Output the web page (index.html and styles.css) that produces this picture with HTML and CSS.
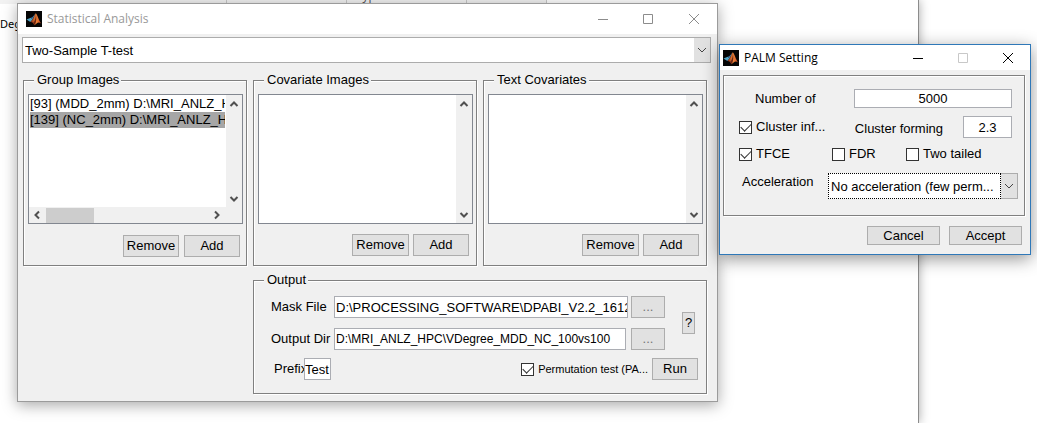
FILE: index.html
```
<!DOCTYPE html>
<html lang="en">
<head>
<meta charset="utf-8">
<title>Statistical Analysis</title>
<link rel="stylesheet" href="styles.css">
</head>
<body>
<svg class="defs" aria-hidden="true">
  <defs>
    <linearGradient id="flame" x1="0" y1="0" x2="1" y2="0">
      <stop offset="0" stop-color="#7a1f10"/><stop offset="0.5" stop-color="#f08a3c"/><stop offset="1" stop-color="#c8401a"/>
    </linearGradient>
    <symbol id="logo" viewBox="0 0 16 16">
      <rect width="16" height="16" fill="#050505"/>
      <path d="M0.5 8.6 4.8 6.8 6.6 8.4 4.4 11z" fill="#4fa3c4"/>
      <path d="M4.8 6.8C7 6.4 8 3.6 9.6 2.4L6.6 8.6z" fill="#3f78a8"/>
      <path d="M4.4 11 6.6 8.4C8 7 8.6 3.6 9.8 2.2 11.4 3.6 12.8 9.6 15.4 12.6 13.4 11.2 12.2 11 10.6 12.4L8.4 14.2C7.6 12.2 6.4 11 4.4 11z" fill="url(#flame)"/>
      <path d="M9.8 2.2C10 6 9.2 10 7 12l1.4 2.2c2-2.2 2.4-7 1.4-12z" fill="#6b2412"/>
    </symbol>
    <symbol id="down" viewBox="0 0 10 10"><path d="M1 3l4 4 4-4" fill="none" stroke="currentColor"/></symbol>
    <symbol id="arrow" viewBox="0 0 10 10"><path d="M1.5 7 5 3.5 8.5 7" fill="none" stroke="#505050" stroke-width="2"/></symbol>
    <symbol id="min" viewBox="0 0 10 10"><path d="M0 5.5h10" stroke="currentColor"/></symbol>
    <symbol id="max" viewBox="0 0 10 10"><path d="M.5.5h9v9h-9z" fill="none" stroke="currentColor"/></symbol>
    <symbol id="close" viewBox="0 0 10 10"><path d="M0 0l10 10M10 0 0 10" stroke="currentColor"/></symbol>
  </defs>
</svg>

<main class="desktop">
  <div class="sheet">
    <div class="sheet-head"><span></span><span></span><span>Type</span><span></span></div>
    <p class="sheet-text">Degree</p>
  </div>

  <section class="window analysis" aria-label="Statistical Analysis">
    <header class="titlebar">
      <svg class="logo"><use href="#logo"/></svg>
      <h1>Statistical Analysis</h1>
      <button class="caption" aria-label="Minimize"><svg><use href="#min"/></svg></button>
      <button class="caption" aria-label="Maximize"><svg><use href="#max"/></svg></button>
      <button class="caption" aria-label="Close"><svg><use href="#close"/></svg></button>
    </header>
    <div class="analysis-body">
      <div class="combo">
        <select aria-label="Test"><option>Two-Sample T-test</option></select>
        <span class="combo-arrow"><svg><use href="#down"/></svg></span>
      </div>
      <div class="panels">
        <fieldset class="panel">
          <legend>Group Images</legend>
          <div class="listbox">
            <ul role="listbox" aria-label="Group Images">
              <li role="option">[93] (MDD_2mm) D:\MRI_ANLZ_H</li>
              <li role="option" aria-selected="true" class="selected">[139] (NC_2mm) D:\MRI_ANLZ_H</li>
            </ul>
            <div class="vscroll"><svg><use href="#arrow"/></svg><svg class="flip"><use href="#arrow"/></svg></div>
            <div class="hscroll"><svg class="left"><use href="#arrow"/></svg><span class="thumb"></span><svg class="right"><use href="#arrow"/></svg></div>
          </div>
          <div class="actions first"><button class="btn">Remove</button><button class="btn">Add</button></div>
        </fieldset>
        <fieldset class="panel">
          <legend>Covariate Images</legend>
          <div class="listbox">
            <ul role="listbox" aria-label="Covariate Images"></ul>
            <div class="vscroll"><svg><use href="#arrow"/></svg><svg class="flip"><use href="#arrow"/></svg></div>
          </div>
          <div class="actions"><button class="btn">Remove</button><button class="btn">Add</button></div>
        </fieldset>
        <fieldset class="panel">
          <legend>Text Covariates</legend>
          <div class="listbox">
            <ul role="listbox" aria-label="Text Covariates"></ul>
            <div class="vscroll"><svg><use href="#arrow"/></svg><svg class="flip"><use href="#arrow"/></svg></div>
          </div>
          <div class="actions"><button class="btn">Remove</button><button class="btn">Add</button></div>
        </fieldset>
        <fieldset class="panel output">
          <legend>Output</legend>
          <div class="paths">
            <div class="path-rows">
              <div class="path-row">
                <label for="mask">Mask File</label>
                <input id="mask" class="field" type="text" value="D:\PROCESSING_SOFTWARE\DPABI_V2.2_161201">
                <button class="btn browse" aria-label="Browse mask file">...</button>
              </div>
              <div class="path-row">
                <label for="outdir">Output Dir</label>
                <input id="outdir" class="field narrow" type="text" value="D:\MRI_ANLZ_HPC\VDegree_MDD_NC_100vs100">
                <button class="btn browse" aria-label="Browse output directory">...</button>
              </div>
            </div>
            <button class="btn help">?</button>
          </div>
          <div class="run-row">
            <label class="prefix-label" for="prefix">Prefix</label>
            <input id="prefix" class="field prefix" type="text" value="Test">
            <label class="check small"><input type="checkbox" checked><span>Permutation test (PA...</span></label>
            <button class="btn run">Run</button>
          </div>
        </fieldset>
      </div>
    </div>
  </section>

  <section class="window palm" aria-label="PALM Setting">
    <header class="titlebar">
      <svg class="logo"><use href="#logo"/></svg>
      <h2>PALM Setting</h2>
      <button class="caption" aria-label="Minimize"><svg><use href="#min"/></svg></button>
      <button class="caption" aria-label="Maximize" disabled><svg><use href="#max"/></svg></button>
      <button class="caption" aria-label="Close"><svg><use href="#close"/></svg></button>
    </header>
    <div class="palm-body">
      <div class="panel settings">
        <div class="setting number">
          <label for="number">Number of</label>
          <input id="number" class="field" type="text" value="5000">
        </div>
        <div class="setting cluster">
          <label class="check"><input type="checkbox" checked><span>Cluster inf...</span></label>
          <label class="forming" for="forming">Cluster forming</label>
          <input id="forming" class="field" type="text" value="2.3">
        </div>
        <div class="setting checks">
          <label class="check"><input type="checkbox" checked><span>TFCE</span></label>
          <label class="check"><input type="checkbox"><span>FDR</span></label>
          <label class="check"><input type="checkbox"><span>Two tailed</span></label>
        </div>
        <div class="setting acceleration">
          <label for="accel">Acceleration</label>
          <div class="combo focused">
            <select id="accel"><option>No acceleration (few perm...</option></select>
            <span class="combo-arrow"><svg><use href="#down"/></svg></span>
          </div>
        </div>
      </div>
      <div class="palm-actions"><button class="btn">Cancel</button><button class="btn">Accept</button></div>
    </div>
  </section>
</main>
</body>
</html>
```
FILE: styles.css
```
* { box-sizing: border-box; }

body {
  margin: 0;
  background: #fff;
  color: #000;
  font: 13px/16px "Liberation Sans", Arial, sans-serif;
}

button, input, select { font: inherit; color: inherit; margin: 0; border-radius: 0; }
svg { display: block; width: 10px; height: 10px; }
.defs { position: absolute; width: 0; height: 0; }

.desktop { position: relative; height: 100vh; overflow: hidden; }

/* Sheet behind the dialogs */
.sheet {
  width: 919px;
  height: 100%;
  border-right: 1px solid #8c8c8c;
  box-shadow: 0 0 10px rgba(0, 0, 0, .35);
}
.sheet-head {
  display: grid;
  grid-template-columns: 227px 120px 120px 80px;
  width: 547px;
  height: 4px;
  overflow: hidden;
  background: #f2f2f2;
}
.sheet-head span {
  border-right: 1px solid #c8c8c8;
  padding-left: 9px;
  font: 12px/16px "Open Sans", sans-serif;
  color: #555;
  margin-top: -12px;
  height: 16px;
}
.sheet-text { margin: 11px 0 0; font: 11px/18px "Noto Sans", sans-serif; }

/* Windows */
.window { position: absolute; background: #f0f0f0; }
.analysis {
  left: 17px;
  top: 3px;
  width: 701px;
  border: 1px solid #9b9b9b;
  box-shadow: 0 3px 14px rgba(0, 0, 0, .35);
}
.palm {
  left: 719px;
  top: 44px;
  width: 312px;
  border: 1px solid #2f78b8;
  box-shadow: 0 4px 16px rgba(0, 0, 0, .42);
}
.titlebar { display: flex; align-items: center; height: 30px; padding-left: 8px; background: #fff; }
.titlebar h1, .titlebar h2 {
  flex: 1;
  margin: 0 0 0 5px;
  font: 12px/16px "Open Sans", sans-serif;
}
.analysis .titlebar { color: #8c8c8c; }
.analysis .titlebar h1 { color: #999; }
.logo { width: 16px; height: 16px; }
.caption {
  display: grid;
  place-items: center;
  width: 45px;
  height: 28px;
  padding: 0;
  border: 0;
  background: none;
}
.analysis .caption:last-child { width: 47px; }
.palm .titlebar { height: 25px; padding-left: 3px; }
.palm .caption { height: 25px; }
.caption:disabled { color: #c8c8c8; }

/* Controls */
.btn {
  height: 22px;
  padding: 0;
  border: 1px solid #adadad;
  background: #e1e1e1;
  text-align: center;
}
.field {
  min-width: 0;
  height: 22px;
  padding: 0 0 0 1px;
  border: 1px solid #abadb3;
  background: #fff;
}
.combo { display: flex; height: 26px; border: 1px solid #acacac; background: #fff; }
.combo select {
  flex: 1;
  min-width: 0;
  padding: 2px 2px 0;
  border: 0;
  outline: 0;
  background: #fff;
  appearance: none;
}
.combo-arrow { display: grid; place-items: center; width: 16px; background: #e1e1e1; color: #444; }
.focused select { border: 1px dotted #000; margin: -1px 0 -1px -1px; }

.check { display: flex; align-items: center; gap: 4px; white-space: nowrap; }
.check input {
  appearance: none;
  flex: none;
  display: grid;
  place-items: center;
  width: 13px;
  height: 13px;
  border: 1px solid #333;
  background: #fff;
}
.check input:checked::before {
  content: "";
  width: 9px;
  height: 5px;
  border: solid #333;
  border-width: 0 0 1px 1px;
  transform: rotate(-45deg);
  margin-bottom: 3px;
}
.small { font-size: 11px; }

/* Etched frames */
.panel {
  min-width: 0;
  margin: 0;
  border: 1px solid #808080;
  box-shadow: 1px 1px #fff, inset 1px 1px #fff;
}
.panel legend { margin-left: 6px; padding: 0 2px 0 3px; background: #f0f0f0; }

/* Statistical Analysis */
.analysis-body { padding: 3px 6px 7px 4px; }
.panels {
  display: grid;
  grid-template-columns: repeat(3, minmax(0, 1fr));
  gap: 6px;
  margin: 9px 4px 0 1px;
}
.panels .panel { padding: 6px 3px 8px 4px; }
.listbox {
  display: grid;
  grid-template-columns: minmax(0, 1fr) 16px;
  grid-template-rows: minmax(0, 1fr) auto;
  height: 130px;
  border: 1px solid #828790;
  background: #fff;
}
.listbox ul {
  margin: 0;
  padding: 1px 1px 0;
  overflow: hidden;
  list-style: none;
  white-space: nowrap;
}
.listbox li { overflow: hidden; }
.selected { background: #a6a6a6; }
.vscroll {
  display: flex;
  flex-direction: column;
  align-items: center;
  justify-content: space-between;
  padding: 4px 0 3px;
  background: #f0f0f0;
}
.flip { transform: rotate(180deg); }
.hscroll {
  grid-column: 1 / -1;
  display: flex;
  align-items: center;
  height: 16px;
  padding: 0 20px 0 3px;
  background: #f0f0f0;
}
.left { transform: rotate(-90deg); }
.right { transform: rotate(90deg); margin-left: auto; }
.thumb { width: 48px; height: 15px; margin-left: 4px; background: #cdcdcd; }
.actions {
  display: grid;
  grid-template-columns: 57px 56px;
  justify-content: end;
  gap: 4px;
  padding: 10px 4px 0 0;
}
.actions.first { grid-template-columns: 56px 56px; gap: 5px; padding: 11px 3px 0 0; }

.panels .output { grid-column: 2 / -1; padding: 8px 8px 13px 17px; }
.output legend { margin-left: -7px; }
.paths { display: flex; align-items: center; padding-right: 3px; }
.path-rows { display: grid; gap: 10px; flex: 1; min-width: 0; }
.path-row {
  display: grid;
  grid-template-columns: 63px minmax(0, 1fr) 34px;
  column-gap: 3px;
  align-items: center;
}
.path-row label { white-space: nowrap; }
.path-row .field { margin-left: -3px; }
.path-row .narrow { margin-right: 2px; font-size: 12px; }
.browse { color: #777; }
.help { width: 13px; margin-left: 17px; }
.run-row { display: flex; align-items: center; margin-top: 8px; }
.prefix-label { width: 30px; margin-left: 3px; }
.prefix { width: 27px; padding: 0; }
.run-row .check { margin-left: auto; }
.run { width: 46px; margin-left: 4px; }

/* PALM Setting */
.palm-body { padding: 5px 5px 9px 3px; }
.settings {
  display: grid;
  grid-template-columns: minmax(0, 1fr);
  padding: 13px 6px 16px 15px;
}
.setting { display: flex; align-items: center; }
.settings .field { text-align: center; padding: 0; }
.number { padding: 0 6px 0 16px; }
.number label { flex: none; width: 99px; }
.number .field { flex: 1; height: 19px; }
.cluster { margin-top: 8px; padding-right: 6px; }
.cluster .forming { margin: 4px 20px 0 auto; white-space: nowrap; }
.cluster .field { flex: none; width: 49px; }
.checks { display: grid; grid-template-columns: 93px 74px auto; margin-top: 8px; }
.acceleration { margin-top: 11px; align-items: flex-start; }
.acceleration label { flex: none; width: 89px; padding: 1px 0 0 3px; }
.acceleration .combo { flex: 1; min-width: 0; }
.palm-actions {
  display: grid;
  grid-template-columns: 73px 73px;
  gap: 9px;
  justify-content: end;
  padding: 10px 3px 0 0;
}
.palm-actions .btn { height: 19px; line-height: 16px; }
```
